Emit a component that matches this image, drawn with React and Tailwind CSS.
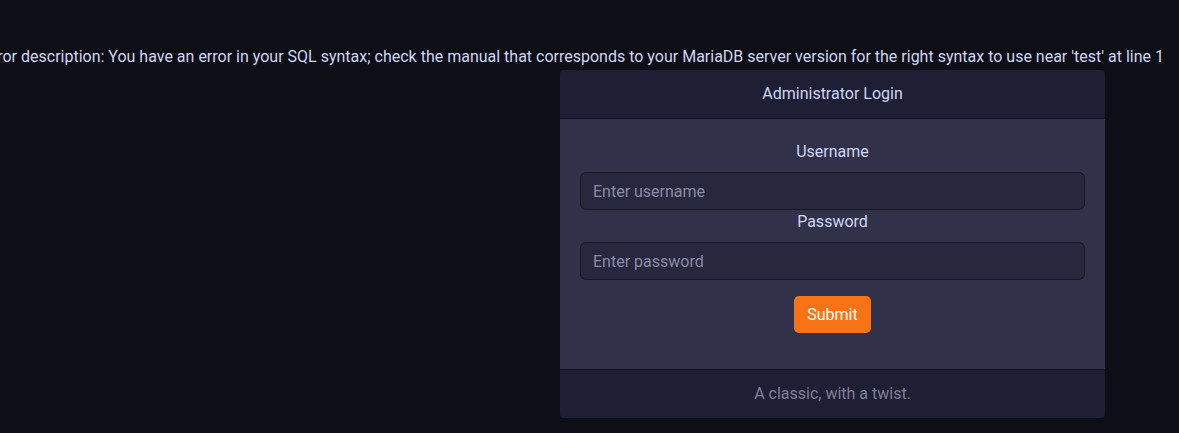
export default function App() {
  return (
    <div
      className="w-[1179px] h-[433px] overflow-hidden bg-[#0e0e16] text-[#cdd6f4] text-base"
      style={{ fontFamily: "Roboto, 'Liberation Sans', sans-serif" }}
    >
      <div className="pt-[45px] flex justify-end pr-[15px] overflow-hidden">
        <p className="whitespace-nowrap leading-6 shrink-0">
          Error description: You have an error in your SQL syntax; check the manual that corresponds to your MariaDB server version for the right syntax to use near 'test' at line 1
        </p>
      </div>
      <div className="ml-[560px] mt-px w-[545px] rounded overflow-hidden">
        <div className="h-[49px] bg-[#1e1e34] flex items-center justify-center border-b border-[#15151f]">
          Administrator Login
        </div>
        <div className="bg-[#32314a] px-5 pt-[21px] pb-[36px] flex flex-col items-center">
          <label className="leading-6">Username</label>
          <input
            className="mt-2 w-full h-[38px] rounded-md bg-[#27273d] border border-[#181825] px-3 text-[#cdd6f4] placeholder-[#8a8ca6] outline-none"
            placeholder="Enter username"
          />
          <label className="leading-6">Password</label>
          <input
            type="password"
            className="mt-2 w-full h-[38px] rounded-md bg-[#27273d] border border-[#181825] px-3 text-[#cdd6f4] placeholder-[#8a8ca6] outline-none"
            placeholder="Enter password"
          />
          <button className="mt-4 h-[37px] w-[77px] rounded-[5px] bg-[#f97316] text-white">
            Submit
          </button>
        </div>
        <div className="h-[49px] bg-[#1e1e34] border-t border-[#15151f] flex items-center justify-center text-[#7f8198]">
          A classic, with a twist.
        </div>
      </div>
    </div>
  );
}
